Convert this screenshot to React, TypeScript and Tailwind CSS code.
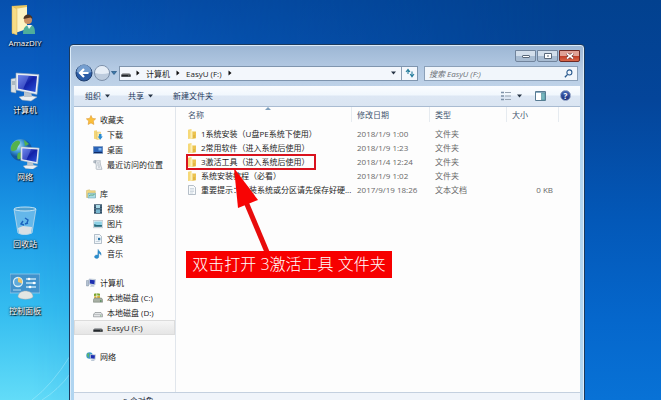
import type { ReactNode } from "react";

const Folder = () => (
  <svg viewBox="0 0 10 10" className="h-[10px] w-[10px] shrink-0">
    <path d="M1 .8L4.500 0v9.500L1 10z" fill="#f6d978" />
    <path d="M4.500 2.500h4.500V9.300l-4.500.6z" fill="#ecc350" />
    <path d="M3.500 1.500l2 .8v7.400l-2-.7z" fill="#fcf0b8" />
    <path d="M7 6v3.200" stroke="#c99a2c" strokeWidth=".6" />
  </svg>
);

const TextFile = () => (
  <svg viewBox="0 0 10 10" className="h-[10px] w-[10px] shrink-0">
    <path d="M1.500.5h5l2 2v7h-7z" fill="#f7fafc" stroke="#98a5b1" strokeWidth=".7" />
    <path d="M3 3.500h4M3 5h4M3 6.500h4M3 8h3" stroke="#b7c3ce" strokeWidth=".6" />
  </svg>
);

const Drive = () => (
  <svg viewBox="0 0 10 10" className="h-[10px] w-[10px] shrink-0">
    <path d="M1.500 5h7l1 2h-9z" fill="#a5a8ab" />
    <path d="M.3 6.500h9.400v2.300H.3z" fill="#23272b" />
    <path d="M7 7.700h1.500" stroke="#8b9a90" strokeWidth=".6" />
  </svg>
);

const MonitorShape = () => (
  <>
    <path d="M3 1l6.500 .5-.5 5.500-6-.8z" fill="#dfe8f2" stroke="#8193aa" strokeWidth=".4" />
    <path d="M3.800 1.800l5 .4-.4 4-4.600-.6z" fill="#1d2fb0" />
    <path d="M5 7h2.500l1 1.800H4z" fill="#bcc8d6" />
  </>
);

const sideIcons: Record<string, ReactNode> = {
  star: <path d="M5 .4l1.400 3 3.300.4-2.400 2.300.6 3.400L5 7.900 2.100 9.500l.6-3.400L.3 3.800l3.300-.4z" fill="#fbbf3a" stroke="#d98e24" strokeWidth=".5" />,
  download: (
    <>
      <path d="M1 .8l3-.6v9.300l-3-.7z" fill="#f3d67a" />
      <path d="M4 2h3.500v7L4 9.500z" fill="#fbe9a4" stroke="#d6b04b" strokeWidth=".4" />
      <path d="M6 4h2.500v2.500h1.300L7.200 9.800 4.700 6.500H6z" fill="#2a8bd2" />
    </>
  ),
  desktop: (
    <>
      <path d="M.3 1.500h9.500v7H.3z" fill="#2a63b8" stroke="#7d97b7" strokeWidth=".6" />
      <path d="M5.500 3h3v2.500h-3z" fill="#7fb6ef" />
      <path d="M1 7.500h8.200" stroke="#102b63" />
    </>
  ),
  recent: (
    <>
      <path d="M2 .8h5.500c-1 1 .3 2 0 4L9 9.300H3.500c-1-1 .3-3-.5-5z" fill="#eef1f4" stroke="#8e9aa6" strokeWidth=".6" />
      <path d="M.8.8h2v2h-2zM4 3h2.500M4.300 5h2.500M5 7h2" fill="#c9d1d8" stroke="#8794a1" strokeWidth=".6" />
    </>
  ),
  library: (
    <>
      <path d="M.5 1.500l3-.8 1 1h4.800V8.500H.5z" fill="#f0d882" stroke="#c2aa58" strokeWidth=".4" />
      <path d="M2 4.200h7.500v4.800H2z" fill="#aadbe6" stroke="#5a9dac" strokeWidth=".5" />
      <path d="M3 7c2-2 3 0 5.500-1.500" stroke="#4b9b5a" fill="none" strokeWidth=".8" />
    </>
  ),
  video: (
    <>
      <path d="M1 .3h8v9.400H1z" fill="#25455e" />
      <path d="M3 1h4v3.300H3z" fill="#a8d8e6" />
      <path d="M3 5.300h4V9H3z" fill="#77b6cf" />
      <path d="M2 .8v8.500M8 .8v8.500" stroke="#cbd8e2" strokeWidth=".7" strokeDasharray=".8 .8" />
    </>
  ),
  picture: (
    <>
      <path d="M.3 1.500h9.500v7.200H.3z" fill="#f2f7fa" stroke="#96a4b0" strokeWidth=".5" />
      <path d="M1.200 2.500h7.700v5.200H1.200z" fill="#8ed0e4" />
      <path d="M1.200 5l2.500 1 5.200 0v1.700H1.200z" fill="#27697b" />
    </>
  ),
  doc: (
    <>
      <path d="M1.500.5h5l2 2v7h-7z" fill="#f2f7fb" stroke="#8799aa" strokeWidth=".6" />
      <path d="M5 3.800h2.300v2.400H5z" fill="#2c77a8" />
      <path d="M2.700 3h2M2.700 5h1.500M2.700 7.500h4" stroke="#a9bac8" strokeWidth=".6" />
    </>
  ),
  music: <path d="M5 .3c.5 2 3.800 2.500 3 6C7.500 4.800 6.500 4.500 5.800 4.300V8C5.500 10 1.500 10 1.500 7.800c0-1.600 2-2.300 3.200-1.600z" fill="#2b8fd0" stroke="#1869a4" strokeWidth=".3" />,
  computer: (
    <>
      <path d="M.5 2.500h2v5.500h-2z" fill="#b4c2d2" stroke="#687c95" strokeWidth=".4" />
      <MonitorShape />
    </>
  ),
  diskC: (
    <>
      <path d="M1 .8L3.500.3v2.400L1 3zM4.200.3L7 .8v2l-2.800-.2z" fill="#7ba52d" />
      <path d="M1.200 3.300h2.300v2H1.200zM4.200 3h2.800v2.500H4.200z" fill="#ddb43a" />
      <path d="M1.500 5h7l1.200 2v2.200H.3V7z" fill="#a8b0a4" stroke="#6b746b" strokeWidth=".5" />
      <path d="M7 8h1.500" stroke="#247b35" />
    </>
  ),
  diskD: (
    <>
      <path d="M2 4.500h6l1.600 2v2.300H.4V6.500z" fill="#e3e5e6" stroke="#777d82" strokeWidth=".6" />
      <path d="M.5 6.500h9" stroke="#999fa3" strokeWidth=".5" />
      <path d="M7 7.800h1.500" stroke="#58a35d" strokeWidth=".7" />
    </>
  ),
  network: (
    <>
      <circle cx="3.500" cy="3.500" r="3.200" fill="#3b9bd0" />
      <path d="M1 2c2-2 3 0 2 1s1 2-1 2.500zM5 1l1.500 2z" fill="#65b957" />
      <g transform="translate(1.500 1.500) scale(.85)"><MonitorShape /></g>
    </>
  ),
};

const SideIcon = ({ name }: { name: string }) =>
  name === "usb" ? <Drive /> : <svg viewBox="0 0 10 10" className="h-[10px] w-[10px] shrink-0">{sideIcons[name]}</svg>;

const groups = [
  { icon: "star", label: "收藏夹", items: [["download", "下载"], ["desktop", "桌面"], ["recent", "最近访问的位置"]] },
  { icon: "library", label: "库", items: [["video", "视频"], ["picture", "图片"], ["doc", "文档"], ["music", "音乐"]] },
  { icon: "computer", label: "计算机", items: [["diskC", "本地磁盘 (C:)"], ["diskD", "本地磁盘 (D:)"], ["usb", "EasyU (F:)"]] },
  { icon: "network", label: "网络", items: [] },
];

const files = [
  ["1系统安装（U盘PE系统下使用）", "2018/1/9 1:00", "文件夹", ""],
  ["2常用软件（进入系统后使用）", "2018/1/9 1:23", "文件夹", ""],
  ["3激活工具（进入系统后使用）", "2018/1/4 12:24", "文件夹", ""],
  ["系统安装教程（必看）", "2018/1/9 1:02", "文件夹", ""],
  ["重要提示：重装系统或分区请先保存好硬...", "2017/9/19 18:26", "文本文档", "0 KB"],
];

const BigMonitor = () => (
  <>
    <path d="M9 25l9-2 9 2-6 4-9-1z" fill="#eceff1" stroke="#9dabb8" strokeWidth=".5" />
    <path d="M14 19h7l1 6h-8z" fill="#b9c4ce" />
    <path d="M6 1l23 1.500-2 20L6 18z" fill="#e9eff5" stroke="#90a3b8" strokeWidth=".6" />
    <path d="M8 3l19 1.300-1.600 15.700L8 16.500z" fill="url(#screen)" />
    <path d="M8 3l11 .7-6 13.800L8 16.500z" fill="#90a5ff" opacity=".35" />
  </>
);

const desktopIcons: { label: string; art: ReactNode }[] = [
  {
    label: "AmazDIY",
    art: (
      <>
        <path d="M2 1l15-1v23L2 29z" fill="#e9c661" />
        <path d="M5 4l12-2v22L5 28z" fill="#fdf3c3" />
        <path d="M2 1l5 3v26l-5-2z" fill="#f7dc86" stroke="#d4ad4c" strokeWidth=".5" />
        <path d="M13 29c0-7 3-9 7-9s5 3 5 9z" fill="#4fae9b" />
        <path d="M17 20l2 4 3-4z" fill="#f3f6f4" />
        <circle cx="18" cy="15" r="4" fill="#c98f62" />
        <path d="M13.500 14c0-6 9-6 9 0l-2-1.500z" fill="#4b3322" />
      </>
    ),
  },
  {
    label: "计算机",
    art: (
      <>
        <path d="M1 7l5-1v15l-5-1z" fill="#d9e1e5" stroke="#8fa0aa" strokeWidth=".5" />
        <path d="M2 10h3M2 12h3" stroke="#7e929d" />
        <BigMonitor />
      </>
    ),
  },
  {
    label: "网络",
    art: (
      <>
        <circle cx="11" cy="11" r="11" fill="url(#globe)" />
        <path d="M3 4c5-5 9-2 6 2s-1 5-5 6-4-4-1-8zM8 14c4-2 6 2 3 5s-5 0-3-5zM14 1l5 4-4 2z" fill="#54b24c" />
        <g transform="translate(6 7) scale(.8)"><BigMonitor /></g>
      </>
    ),
  },
  {
    label: "回收站",
    art: (
      <>
        <path d="M4 3l22-1-4 25c-4 2-11 2-14 0z" fill="#8cc8ec" opacity=".65" />
        <path d="M8 22l5-2 9 1-1 6c-4 2-9 2-12 0z" fill="#d8dfe4" />
        <ellipse cx="15" cy="3" rx="11" ry="2" fill="#4f9fcf" stroke="#dff4fc" strokeWidth=".8" />
        <path d="M4 3l4 24c3 2 10 2 14 0L26 3" fill="none" stroke="#c2dcea" strokeWidth=".8" />
        <path d="M13 15l-2 3 3 1M15 12l3 2-1 3M15 18l3-1" fill="none" stroke="#1b62bd" strokeWidth="1.400" />
      </>
    ),
  },
  {
    label: "控制面板",
    art: (
      <>
        <path d="M0 1h30v19H0z" fill="#4192cc" stroke="#94c9e9" strokeWidth=".8" />
        <circle cx="8" cy="9" r="4.500" fill="#5fa9da" stroke="#d8eef9" strokeWidth="1.300" />
        <path d="M8 9V4.500a4.500 4.500 0 0 1 4 6z" fill="#f1c66a" />
        <path d="M16 6h10M16 10h10M16 14h10" stroke="#c2e3f4" strokeWidth="1.300" />
        <circle cx="19" cy="6" r="1.300" fill="#fff" />
        <circle cx="24" cy="10" r="1.300" fill="#fff" />
        <circle cx="20" cy="14" r="1.300" fill="#fff" />
        <path d="M3 17h8" stroke="#b4daf0" />
        <path d="M8 24c0-8 15-8 15 0-3 3-12 3-15 0z" fill="#e3e6e3" stroke="#9eaab0" strokeWidth=".5" />
      </>
    ),
  },
];

const Down = () => (
  <svg viewBox="0 0 5 4" className="h-1 w-[5px] shrink-0"><path d="M0 .5h5L2.500 3.500z" fill="#263344" /></svg>
);
const Chevron = () => (
  <svg viewBox="0 0 4 6" className="h-[6px] w-1 shrink-0"><path d="M.5.500L3.500 3l-3 2.500z" fill="#111" /></svg>
);

const captionButton = "flex h-3 items-center justify-center rounded-b-[2px] border";
const cell = "truncate p-0 pl-[5px] text-left font-normal";

export default function App() {
  return (
    <main className="relative flex h-screen overflow-hidden bg-[linear-gradient(180deg,#0650ae_0%,#0a5fc4_20%,#0e7bd8_38%,#1f9fe8_58%,#35bdf0_78%,#62dcf8_100%)] font-['Open_Sans','Noto_Sans_CJK_SC',sans-serif] text-[8px] leading-[15px] text-[#1c1c1c]">
      <div className="absolute inset-0 bg-[linear-gradient(180deg,#02418f_0%,#04459a_25%,#0358b8_55%,#0567cc_80%,#0872d6_100%)] [mask-image:linear-gradient(90deg,transparent_5%,black_85%)]" />
      <svg viewBox="0 0 70 60" className="absolute bottom-0 left-0 h-[60px] w-[70px]">
        <path d="M32 60Q52 45 70 16M42 60Q58 50 70 34" fill="none" stroke="#c8f7ff" strokeWidth="1" opacity=".35" />
      </svg>
      <svg className="absolute h-0 w-0">
        <defs>
          <linearGradient id="screen" x1="0" y1="0" x2="1" y2="1">
            <stop offset="0" stopColor="#5a74e0" /><stop offset=".5" stopColor="#1222a8" /><stop offset="1" stopColor="#2c55dc" />
          </linearGradient>
          <radialGradient id="globe" cx=".35" cy=".3">
            <stop offset="0" stopColor="#b9e6f7" /><stop offset=".6" stopColor="#3d97d4" /><stop offset="1" stopColor="#15599f" />
          </radialGradient>
        </defs>
      </svg>

      <nav aria-label="桌面" className="relative flex w-[69px] shrink-0 flex-col pt-[5px] pr-[19px]">
        {desktopIcons.map((d) => (
          <button key={d.label} className="flex h-[67px] shrink-0 flex-col items-center">
            <svg viewBox="0 0 30 30" className="h-[30px] w-[30px]">{d.art}</svg>
            <span className="text-white [text-shadow:0_0_2px_#000,1px_1px_1px_#000]">{d.label}</span>
          </button>
        ))}
      </nav>

      <section className="relative mt-11 mr-[76px] flex h-[400px] min-w-0 flex-1 flex-col rounded-t-[4px] border border-[#1b3a5e] bg-[linear-gradient(180deg,#9cb6d4_0%,#b4cae3_6%,#c3d6ea_12%,#b3d5f0_22%,#b0d5f1_100%)] px-1 shadow-[inset_0_0_0_1px_#dcebf8]">
        <header className="flex h-[19px] shrink-0 items-start justify-end gap-px pt-[5px]">
          <button aria-label="最小化" className={`${captionButton} w-[21px] border-[#71849c] bg-[linear-gradient(#d2deeb_45%,#a8bcd2_50%)]`}>
            <span className="h-[3px] w-2 rounded-[1px] border border-[#59687a] bg-white" />
          </button>
          <button aria-label="最大化" className={`${captionButton} w-[21px] border-[#71849c] bg-[linear-gradient(#d2deeb_45%,#a8bcd2_50%)]`}>
            <svg viewBox="0 0 8 6" className="h-[6px] w-2"><path d="M.5.5h7v5h-7z" fill="#fff" stroke="#59687a" /><path d="M3 2.500h2v1H3z" fill="#59687a" /></svg>
          </button>
          <button aria-label="关闭" className={`${captionButton} w-[21px] border-[#6d2a25] bg-[linear-gradient(#e0a296_45%,#c03c26_50%,#d9684a)]`}>
            <svg viewBox="0 0 8 6" className="h-[6px] w-2"><path d="M1 .5l6 5M7 .5l-6 5" stroke="#69302b" strokeWidth="3" /><path d="M1 .500l6 5M7 .5l-6 5" stroke="#fff" strokeWidth="1.700" /></svg>
          </button>
        </header>

        <div className="flex h-[22px] shrink-0 items-center pr-[2px] pb-[4px]">
          <button aria-label="后退" className="ml-px size-[18px] shrink-0">
            <svg viewBox="0 0 18 18">
              <circle cx="9" cy="9" r="8" fill="#2b5ca5" stroke="#1e3c6c" />
              <path d="M1.500 8a7.500 7.500 0 0 1 15 0q-7 3-15 0z" fill="#8db4df" opacity=".75" />
              <path d="M13.500 9H5.500M9 5L5 9l4 4" stroke="#fff" strokeWidth="2.200" fill="none" />
            </svg>
          </button>
          <button aria-label="前进" className="size-[18px] shrink-0">
            <svg viewBox="0 0 18 18">
              <circle cx="9" cy="9" r="7.500" fill="#bccbdd" stroke="#7c8fa8" />
              <path d="M2 9a7 7 0 0 1 14 0q-7 2-14 0z" fill="#e5edf6" />
            </svg>
          </button>
          <button aria-label="历史" className="mr-[2px] flex w-[6px] justify-center"><svg viewBox="0 0 6 4" className="h-1 w-[6px]"><path d="M.5.5h5L3 3.500z" fill="#3c78aa" stroke="#24547f" strokeWidth=".7" /></svg></button>
          <div className="flex h-[15px] min-w-0 flex-1 items-center border border-[#7f95ae] bg-[#f3f7fc]">
            <span className="mx-px"><Drive /></span>
            <span className="ml-1 flex items-center gap-[6px]"><Chevron /><button>计算机</button><Chevron /><button>EasyU (F:)</button><Chevron /></span>
            <button aria-label="展开" className="mr-1 ml-auto px-px"><Down /></button>
            <button aria-label="刷新" className="flex h-full w-4 items-center justify-center border-l border-[#8b9db3]">
              <svg viewBox="0 0 10 10" className="size-[10px]"><path d="M3 6V3.500H5M1 4L3 1.500 5 4M7 3.500v3.800H5.500M5.200 6l1.800 2.800L9 6" stroke="#277e9d" strokeWidth="1.100" fill="none" /></svg>
            </button>
          </div>
          <label className="ml-[6px] flex h-[15px] w-[154px] shrink-0 items-center border border-[#8ba0b8] bg-[#f1f6fb] px-1">
            <input type="search" aria-label="搜索" placeholder="搜索 EasyU (F:)" className="min-w-0 flex-1 bg-transparent italic outline-none placeholder:text-[#6c7178]" />
            <svg viewBox="0 0 10 10" className="size-[9px]"><circle cx="6" cy="3.800" r="2.800" fill="none" stroke="#28598d" strokeWidth="1.200" /><path d="M4 6L1 9.200" stroke="#28598d" strokeWidth="1.500" /></svg>
          </label>
        </div>

        <div className="flex h-[21px] shrink-0 items-center border-b border-[#a9bbd1] bg-[linear-gradient(#fbfdff_0%,#f1f7fd_45%,#dde7f4_50%,#dae5f2_100%)] pr-[9px] pb-px pl-[11px] text-[#1e395b]">
          <button className="flex items-center gap-1">组织 <Down /></button>
          <button className="ml-[18px] flex items-center gap-1">共享 <Down /></button>
          <button className="ml-5">新建文件夹</button>
          <button aria-label="更改视图" className="ml-auto flex items-center gap-[6px]">
            <svg viewBox="0 0 10 10" className="size-[10px]"><path d="M0 1.500h3M0 5h3M0 8.500h3" stroke="#7d91a7" strokeWidth="1.500" /><path d="M4 1.500h6M4 5h6M4 8.500h6" stroke="#97a4b2" /></svg>
            <Down />
          </button>
          <button aria-label="预览窗格" className="ml-[13px]"><svg viewBox="0 0 11 10" className="h-[10px] w-[11px]"><path d="M.5.500h10v9H.5z" fill="#fff" stroke="#587b92" /><path d="M1 1.500h9" stroke="#8badc2" /><path d="M6.500 2h3.500v7H6.500z" fill="#74b6bf" stroke="#4f8995" strokeWidth=".6" /></svg></button>
          <button aria-label="帮助" className="ml-[14px] flex size-[11px] items-center justify-center rounded-full border border-[#8b9cc1] bg-[linear-gradient(#4668b5,#182e7c)] font-bold text-white">?</button>
        </div>

        <div className="flex h-[285px] shrink-0 bg-[#fdfdfd]">
          <aside className="flex w-[102px] shrink-0 flex-col gap-[14px] border-r border-[#e1e6ec] pt-[5px]">
            {groups.map((g) => (
              <div key={g.label}>
                <button className="flex h-[15px] w-full items-center gap-1 pl-3"><SideIcon name={g.icon} />{g.label}</button>
                {g.items.map(([icon, label]) => (
                  <button key={label} className={`flex h-[15px] w-full items-center gap-1 pl-[19px] whitespace-nowrap ${icon === "usb" ? "bg-[linear-gradient(#f7f7f7,#e4e4e4)] outline -outline-offset-1 outline-[#dcdcdc]" : ""}`}>
                    <SideIcon name={icon} />{label}
                  </button>
                ))}
              </div>
            ))}
          </aside>
          <div className="relative min-w-0 flex-1">
            <table className="w-full table-fixed border-collapse">
              <colgroup><col className="w-[176px]" /><col className="w-[78px]" /><col className="w-[77px]" /><col className="w-[52px]" /><col /></colgroup>
              <thead>
                <tr className="h-[20px] align-top text-[#43566f]">
                  {["名称", "修改日期", "类型", "大小"].map((h) => (
                    <th key={h} scope="col" className="p-0 text-left font-normal">
                      <div className={`relative border-r border-[#e6ebf0] ${h === "名称" ? "pl-3" : "pl-[5px]"}`}>
                        {h}
                        {h === "名称" && <svg viewBox="0 0 6 3" className="absolute top-0 left-[89px] h-[3px] w-[6px]"><path d="M3 0l3 3H0z" fill="#7fa0bd" /></svg>}
                      </div>
                    </th>
                  ))}
                  <td />
                </tr>
              </thead>
              <tbody className="leading-[14px] text-[#686868]">
                {files.map(([name, date, type, size], i) => (
                  <tr key={name}>
                    <td className="p-0 text-[#1c1c1c]">
                      <div className={`ml-[10px] flex h-[14px] w-[164px] items-center gap-1 pl-px whitespace-nowrap ${i === 2 ? "relative" : ""}`}>
                        {i === 4 ? <TextFile /> : <Folder />}{name}
                        {i === 2 && <span className="absolute -inset-y-px left-0 w-[130px] border-2 border-[#d9121e]" />}
                      </div>
                    </td>
                    <td className={cell}>{date}</td>
                    <td className={cell}>{type}</td>
                    <td className="p-0 pr-[6px] text-right">{size}</td>
                    <td />
                  </tr>
                ))}
              </tbody>
            </table>
            <svg viewBox="0 0 40 90" className="absolute top-[61px] left-[54px] h-[90px] w-10">
              <path d="M16 34l21 50" stroke="#e80c0c" strokeWidth="5" />
              <path d="M4 0l24 32-20 8z" fill="#f80404" />
            </svg>
            <p className="absolute top-[144px] left-[10px] w-[206px] bg-[#f70000] text-center text-[16px] leading-[27px] font-light whitespace-nowrap text-white">双击打开 3激活工具 文件夹</p>
          </div>
        </div>
        <footer className="h-[50px] shrink-0 border-t border-[#c4d0df] bg-[#f0f4fa] pl-[49px] text-[#1e2c40]">5 个对象</footer>
      </section>
    </main>
  );
}
